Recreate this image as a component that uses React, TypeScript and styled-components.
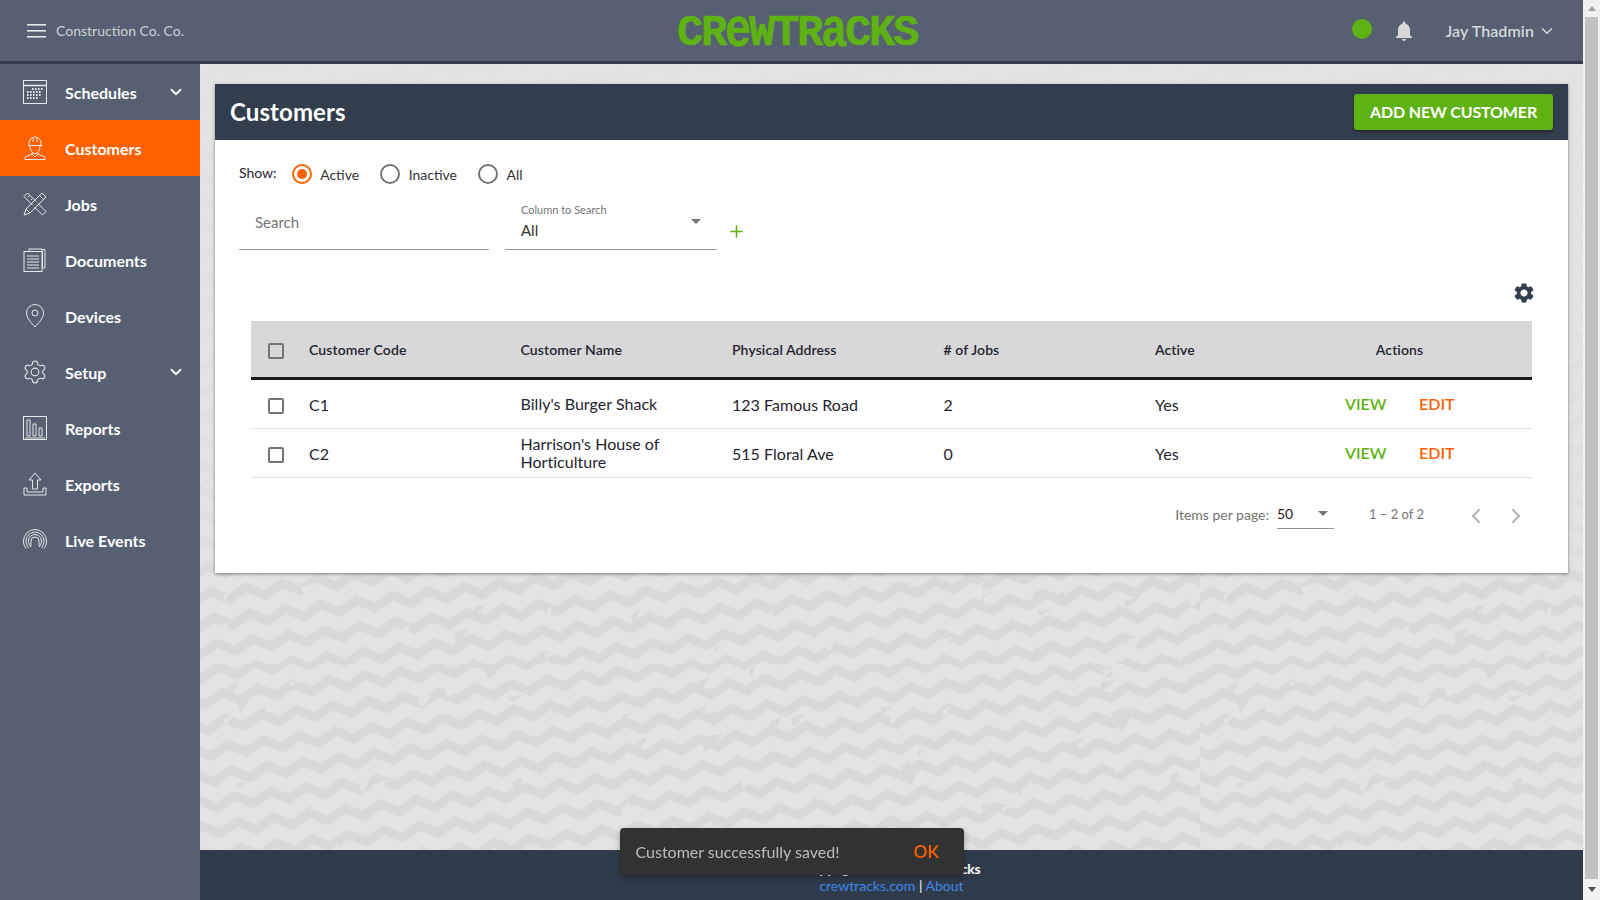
import React from 'react';
import styled, { createGlobalStyle } from 'styled-components';
import { ChevronDown, ChevronLeft, ChevronRight, Plus } from 'lucide-react';

const colors = {
  slate: '#566072',
  navy: '#323d4d',
  orange: '#ff6100',
  green: '#5fb213',
  icon: '#e6e8ea',
  text: '#1f2430',
  rule: '#e0e0e0',
};

// wallpaper: one big tile of tilted zigzags with some scuffs on it
function buildWallpaper() {
  let scuffs = '';
  let seed = 7;
  const next = (n: number) => {
    seed = (seed * 16807) % 2147483647;
    return seed % n;
  };
  for (let i = 0; i < 240; i++) {
    const x = next(1000);
    const y = next(600);
    const a = 5 + next(13);
    const b = 2 + next(5);
    const fill = i % 2 ? '#e3e3e3' : '#d9d9d9';
    scuffs += `<polygon points="${x},${y} ${x + a},${y - b} ${x + a / 2},${y + b} ${x + 2},${y + b + 3}" fill="${fill}"/>`;
  }
  const band = (y: number) =>
    `<path d="M-18 ${y} L0 ${y + 10} L18 ${y} L36 ${y + 10} L54 ${y}" fill="none" stroke="#d9d9d9" stroke-width="9"/>`;
  const svg = `<svg xmlns="http://www.w3.org/2000/svg" width="1000" height="600"><defs><pattern id="z" width="36" height="26" patternUnits="userSpaceOnUse" patternTransform="rotate(-7)">${band(-21)}${band(5)}${band(31)}</pattern></defs><rect width="1000" height="600" fill="#e3e3e3"/><rect width="1000" height="600" fill="url(#z)"/>${scuffs}</svg>`;
  return `data:image/svg+xml,${encodeURIComponent(svg)}`;
}

const wallpaper = buildWallpaper();

const GlobalStyle = createGlobalStyle`
  html, body {
    margin: 0;
    height: 100%;
    overflow: hidden;
  }
  body {
    font-family: Lato, "Liberation Sans", sans-serif;
    color: ${colors.text};
  }
  * {
    box-sizing: border-box;
  }
`;

const Shell = styled.div`
  display: flex;
  width: 1600px;
  height: 900px;
`;

const Main = styled.div`
  flex: 1;
  min-width: 0;
  display: flex;
  flex-direction: column;
`;

const ScrollTrack = styled.div`
  width: 17px;
  display: flex;
  flex-direction: column;
  align-items: center;
  background: #f1f1f1;
`;

const ScrollStep = styled.div<{ $down?: boolean }>`
  height: ${(p) => (p.$down ? '21px' : '17px')};
  flex: none;
  padding-top: ${(p) => (p.$down ? '8px' : '6px')};
  &::before {
    content: '';
    display: block;
    border: 4px solid transparent;
    border-top: ${(p) => (p.$down ? '5px solid #505050' : '0')};
    border-bottom: ${(p) => (p.$down ? '0' : '5px solid #a3a3a3')};
  }
`;

const ScrollThumb = styled.div`
  flex: 1;
  width: 13px;
  background: #c1c1c1;
`;

const TopBar = styled.header`
  height: 64px;
  flex: none;
  display: grid;
  grid-template-columns: 1fr auto 1fr;
  align-items: center;
  padding: 0 27px 0 27px;
  background: ${colors.slate};
  border-bottom: 3px solid ${colors.navy};
`;

const Company = styled.div`
  display: flex;
  align-items: center;
  gap: 10px;
  font-size: 14px;
  color: #cdd1d6;
`;

const Burger = styled.svg`
  width: 19px;
  height: 14px;
`;

const Logo = styled.div`
  margin: 4px 0 0 11px;
  width: 240px;
  font-family: 'Liberation Mono', monospace;
  font-weight: 700;
  font-size: 44px;
  line-height: 30px;
  letter-spacing: -2.4px;
  color: ${colors.green};
  -webkit-text-stroke: 0.5px ${colors.green};
  white-space: nowrap;
`;

const LogoSmall = styled.span`
  display: inline-block;
  transform: scaleY(1.25);
  transform-origin: 50% 78%;
`;

const TopRight = styled.div`
  display: flex;
  align-items: center;
  justify-content: flex-end;
`;

const StatusDot = styled.span`
  width: 20px;
  height: 20px;
  border-radius: 50%;
  background: ${colors.green};
  margin: -3px 20px 0 0;
`;

const Bell = styled.svg`
  width: 24px;
  height: 24px;
  margin-right: 29px;
  fill: #d8d8d8;
`;

const UserName = styled.div`
  display: flex;
  align-items: center;
  gap: 4px;
  font-size: 16px;
  font-weight: 600;
  letter-spacing: 0.1px;
  color: #d5d8dc;
`;

const Body = styled.div`
  flex: 1;
  min-height: 0;
  display: flex;
`;

const SideNav = styled.nav`
  width: 200px;
  flex: none;
  background: ${colors.slate};
`;

const NavRow = styled.div<{ $active?: boolean }>`
  height: 56px;
  display: flex;
  align-items: center;
  padding: 0 15px 0 23px;
  background: ${(p) => (p.$active ? colors.orange : 'transparent')};
  color: #fff;
  font-size: 16px;
  font-weight: 700;
`;

const NavIcon = styled.svg`
  width: 24px;
  height: 24px;
  margin-right: 18px;
  flex: none;
  fill: none;
  stroke: ${colors.icon};
  stroke-width: 1;
`;

const NavLabel = styled.span`
  flex: 1;
`;

const Content = styled.div`
  flex: 1;
  min-width: 0;
  display: flex;
  flex-direction: column;
  background-color: #e3e3e3;
  background-image: linear-gradient(
      rgba(227, 227, 227, 0.92),
      rgba(227, 227, 227, 0.6) 480px,
      rgba(227, 227, 227, 0) 515px
    ),
    url("${wallpaper}");
`;

const ScrollArea = styled.main`
  flex: 1;
  min-height: 0;
  padding: 20px 15px 0;
`;

const Card = styled.section`
  height: 489px;
  background: #fff;
  box-shadow: 0 1px 3px rgba(0, 0, 0, 0.45);
`;

const CardHead = styled.div`
  height: 56px;
  display: flex;
  align-items: center;
  justify-content: space-between;
  padding: 0 15px;
  background: ${colors.navy};
`;

const CardTitle = styled.h1`
  margin: -2px 0 0;
  font-size: 24px;
  font-weight: 700;
  letter-spacing: 0.1px;
  color: #fff;
`;

const PrimaryButton = styled.button`
  width: 199px;
  height: 36px;
  padding: 0 0 2px;
  border: 0;
  border-radius: 3px;
  background: ${colors.green};
  color: #fff;
  font-family: inherit;
  font-size: 16px;
  font-weight: 700;
  letter-spacing: -0.15px;
  box-shadow: 0 2px 3px rgba(0, 0, 0, 0.35);
`;

const ShowRow = styled.div`
  height: 40px;
  margin-top: 14px;
  padding: 0 24px;
  display: flex;
  align-items: center;
  font-size: 14px;
`;

const ShowLabel = styled.span`
  margin-right: 15px;
  margin-top: -3px;
`;

const RadioOption = styled.label`
  display: flex;
  align-items: center;
  gap: 8.5px;
  margin-right: 21px;
  color: #333;
`;

const RadioRing = styled.span<{ $on?: boolean }>`
  width: 20px;
  height: 20px;
  border-radius: 50%;
  border: 2px solid ${(p) => (p.$on ? colors.orange : '#757575')};
  display: flex;
  align-items: center;
  justify-content: center;
  &::after {
    content: '';
    width: 10px;
    height: 10px;
    border-radius: 50%;
    background: ${(p) => (p.$on ? colors.orange : 'transparent')};
  }
`;

const FilterRow = styled.div`
  display: flex;
  align-items: flex-end;
  gap: 16px;
  padding: 0 24px;
  margin-top: 1px;
`;

const SearchInput = styled.input`
  width: 250px;
  height: 55px;
  padding: 0 16px;
  border: 0;
  border-bottom: 1px solid #949494;
  outline: none;
  font-family: inherit;
  font-size: 15px;
  background: transparent;
  &::placeholder {
    color: #757575;
    opacity: 1;
  }
`;

const SelectBox = styled.div`
  position: relative;
  width: 212px;
  height: 55px;
  padding: 8px 16px 0;
  border-bottom: 1px solid #949494;
`;

const SelectCaption = styled.div`
  font-size: 11px;
  line-height: 14px;
  color: #757575;
`;

const SelectValue = styled.div`
  margin-top: 3px;
  font-size: 15px;
  line-height: 20px;
  color: #333;
`;

const Caret = styled.span`
  display: block;
  width: 0;
  height: 0;
  border-left: 5px solid transparent;
  border-right: 5px solid transparent;
  border-top: 5px solid #757575;
`;

const SelectCaret = styled(Caret)`
  position: absolute;
  right: 16px;
  top: 24px;
`;

const AddFilter = styled.span`
  display: flex;
  margin: 0 0 9px -6px;
  color: ${colors.green};
`;

const TableTools = styled.div`
  height: 71px;
  padding: 31px 32px 0 0;
  display: flex;
  justify-content: flex-end;
  align-items: flex-start;
`;

const Gear = styled.svg`
  width: 24px;
  height: 24px;
  fill: ${colors.navy};
`;

const TableWrap = styled.div`
  margin: 0 36px;
`;

const Row = styled.div<{ $head?: boolean }>`
  display: grid;
  grid-template-columns: 58px 211.5px 211.5px 211.5px 211.5px 112px 1fr;
  align-items: center;
  height: ${(p) => (p.$head ? '59px' : '49px')};
  background: ${(p) => (p.$head ? '#d8d8d8' : 'transparent')};
  border-bottom: ${(p) => (p.$head ? '3px solid #1b1b1b' : `1px solid ${colors.rule}`)};
  font-size: ${(p) => (p.$head ? '14px' : '16px')};
  font-weight: ${(p) => (p.$head ? 600 : 400)};
  letter-spacing: ${(p) => (p.$head ? '0.1px' : '0.03px')};
`;

const CheckCell = styled.div`
  padding: 3px 0 0 17px;
  display: flex;
`;

const CheckBox = styled.span`
  width: 16px;
  height: 16px;
  border: 2px solid #757575;
  border-radius: 2px;
`;

const NameCell = styled.div`
  line-height: 18.5px;
  padding-right: 20px;
`;

const ActionsHead = styled.div`
  text-align: center;
`;

const ActionLinks = styled.div`
  display: flex;
  padding-left: 78px;
  margin-top: -2px;
`;

const ActionLink = styled.a<{ $tone: string }>`
  width: 74px;
  font-weight: 600;
  letter-spacing: 0;
  color: ${(p) => p.$tone};
`;

const Pager = styled.div`
  height: 70px;
  margin: 0 36px;
  padding-top: 2px;
  display: flex;
  align-items: center;
  justify-content: flex-end;
  font-size: 14px;
  color: #757575;
`;

const PageSize = styled.div`
  width: 57px;
  height: 30px;
  margin: 0 35px 0 8px;
  display: flex;
  justify-content: space-between;
  align-items: center;
  padding-right: 6px;
  border-bottom: 1px solid #949494;
  color: #222;
  font-size: 14px;
`;

const PageCount = styled.span`
  margin-right: 24px;
  font-size: 13px;
`;

const PageArrow = styled.span`
  display: flex;
  margin-left: 16px;
  color: #b5b5b5;
`;

const PageArrows = styled.div`
  display: flex;
  margin: 3px 4px 0 0;
`;

const Foot = styled.footer`
  height: 50px;
  flex: none;
  padding-top: 10px;
  background: #2f3b4b;
  text-align: center;
  font-size: 14px;
  line-height: 17px;
  color: #fff;
`;

const FootLine = styled.div<{ $strong?: boolean }>`
  font-weight: ${(p) => (p.$strong ? 700 : 400)};
  letter-spacing: ${(p) => (p.$strong ? '-0.35px' : '0')};
`;

const FootLink = styled.a`
  color: #3f87e8;
`;

const Snack = styled.div`
  position: fixed;
  left: 620px;
  top: 828px;
  width: 344px;
  height: 47px;
  display: flex;
  align-items: center;
  justify-content: space-between;
  padding: 0 25px 0 15.5px;
  border-radius: 4px;
  background: #323232;
  color: #bdbdbd;
  font-size: 16px;
  box-shadow: 0 3px 6px rgba(0, 0, 0, 0.3);
`;

const SnackAction = styled.span`
  color: ${colors.orange};
  font-size: 17px;
  font-weight: 600;
`;

const navItems = [
  { label: 'Schedules', icon: 'calendar', more: true },
  { label: 'Customers', icon: 'worker', active: true },
  { label: 'Jobs', icon: 'tools' },
  { label: 'Documents', icon: 'docs' },
  { label: 'Devices', icon: 'pin' },
  { label: 'Setup', icon: 'gear', more: true },
  { label: 'Reports', icon: 'bars' },
  { label: 'Exports', icon: 'export' },
  { label: 'Live Events', icon: 'live' },
];

const customers = [
  { code: 'C1', name: "Billy's Burger Shack", address: '123 Famous Road', jobs: 2 },
  { code: 'C2', name: "Harrison's House of Horticulture", address: '515 Floral Ave', jobs: 0 },
];

function IconShape({ name }: { name: string }) {
  switch (name) {
    case 'calendar':
      return (
        <>
          <rect x="0.5" y="0.5" width="23" height="23" />
          <path d="M0.5 5.5h23" strokeWidth="1.5" />
          <path
            d="M9 9h1.6M12 9h1.6M15 9h1.6M18 9h1.6M4 12h1.6M7 12h1.6M10 12h1.6M13 12h1.6M16 12h1.6M4 15h1.6M7 15h1.6M10 15h1.6M13 15h1.6M16 15h1.6M4 18h1.6M7 18h1.6M10 18h1.6M13 18h1.6"
            strokeWidth="2"
          />
        </>
      );
    case 'worker':
      return (
        <>
          <path d="M6 9.500V7a6 6 0 0 1 12 0v2.500M4.800 9.500h14.400M10 1.500V6M14 1.500V6" />
          <path d="M7 10c0 4 2 7.500 5 7.500s5-3.500 5-7.500" />
          <path d="M9 16.500v1.500l-7 3v2.500h20V21l-7-3v-1.500M9 18l3 3 3-3" />
        </>
      );
    case 'tools':
      return (
        <>
          <path d="M9.500 13 1 4.500 4.500 1 13 9.500" />
          <path d="M15 11.500 23 19.500 19.500 23 11.500 15" />
          <path d="M6.500 3.500 5 5M9.500 6.500 8 8" />
          <path d="M19 1l4 4L7 21l-6 2 2-6Z" />
          <path d="M16.500 3.500l4 4M3 17l4 4" />
        </>
      );
    case 'docs':
      return (
        <>
          <path d="M6 3V1h13v2M19 1.500h3V20h-2" />
          <rect x="1" y="3.500" width="18" height="20" />
          <path d="M19.500 3v17" />
          <path d="M4 8h12M4 11h12M4 14h12M4 17h12M4 20h12" strokeWidth="1.200" />
        </>
      );
    case 'pin':
      return (
        <>
          <path d="M12 23C9 19.500 3.500 14.500 3.500 9a8.500 8.500 0 0 1 17 0c0 5.500-5.500 10.500-8.500 14Z" />
          <circle cx="12" cy="9" r="3" />
        </>
      );
    case 'gear':
      return (
        <g transform="translate(-1.200 -1.200) scale(1.100)">
          <path d="M9.671 4.136a2.34 2.34 0 0 1 4.659 0 2.34 2.34 0 0 0 3.319 1.915 2.34 2.34 0 0 1 2.33 4.033 2.34 2.34 0 0 0 0 3.831 2.34 2.34 0 0 1-2.33 4.033 2.34 2.34 0 0 0-3.319 1.915 2.34 2.34 0 0 1-4.659 0 2.34 2.34 0 0 0-3.32-1.915 2.34 2.34 0 0 1-2.33-4.033 2.34 2.34 0 0 0 0-3.831A2.34 2.34 0 0 1 6.35 6.051a2.34 2.34 0 0 0 3.319-1.915" />
          <circle cx="12" cy="12" r="3.500" />
        </g>
      );
    case 'bars':
      return (
        <>
          <rect x="0.500" y="0.500" width="23" height="23" />
          <path d="M4 4h3v16H4ZM10 8h3v12h-3ZM16 12h3v8h-3ZM2 22h20" />
        </>
      );
    case 'export':
      return (
        <>
          <path d="M12 1l6 7h-3.500v9h-5V8H6Z" />
          <path d="M1 16v7h22v-7h-3v4H4v-4Z" />
        </>
      );
    default:
      return (
        <>
          <path d="M3 20.500C1 18 .5 15.500.5 13a11.500 11.500 0 0 1 23 0c0 2.500-.5 5-2.500 7.500" />
          <path d="M5.500 20C4 18 3 15.500 3 13a9 9 0 0 1 18 0c0 2.500-1 5-2.500 7" />
          <path d="M8 19C6.500 17.500 5.500 15.500 5.500 13a6.500 6.500 0 0 1 13 0c0 2.500-1 4.500-2.500 6" />
          <path d="M8 18v-5a4 4 0 0 1 8 0v5" />
        </>
      );
  }
}

export default function App() {
  return (
    <Shell>
      <GlobalStyle />
      <Main>
        <TopBar>
          <Company>
            <Burger viewBox="0 0 19 14" fill="#e6e8ea">
              <rect y="0" width="19" height="1.600" />
              <rect y="6" width="19" height="1.600" />
              <rect y="12" width="19" height="1.600" />
            </Burger>
            Construction Co. Co.
          </Company>
          <Logo>
            CR<LogoSmall>e</LogoSmall>WTR<LogoSmall>a</LogoSmall>CKS
          </Logo>
          <TopRight>
            <StatusDot />
            <Bell viewBox="0 0 24 24">
              <path d="M12 22c1.100 0 2-.900 2-2h-4c0 1.100.900 2 2 2zm6-6v-5c0-3.070-1.630-5.640-4.500-6.320V4c0-.830-.670-1.500-1.500-1.500s-1.500.670-1.500 1.500v.680C7.640 5.360 6 7.920 6 11v5l-2 2v1h16v-1l-2-2z" />
            </Bell>
            <UserName>
              Jay Thadmin
              <ChevronDown size={18} />
            </UserName>
          </TopRight>
        </TopBar>
        <Body>
          <SideNav>
            {navItems.map((item) => (
              <NavRow key={item.label} $active={item.active}>
                <NavIcon viewBox="0 0 24 24">
                  <IconShape name={item.icon} />
                </NavIcon>
                <NavLabel>{item.label}</NavLabel>
                {item.more && <ChevronDown size={18} strokeWidth={2.500} />}
              </NavRow>
            ))}
          </SideNav>
          <Content>
            <ScrollArea>
              <Card>
                <CardHead>
                  <CardTitle>Customers</CardTitle>
                  <PrimaryButton>ADD NEW CUSTOMER</PrimaryButton>
                </CardHead>
                <ShowRow>
                  <ShowLabel>Show:</ShowLabel>
                  <RadioOption>
                    <RadioRing $on />
                    Active
                  </RadioOption>
                  <RadioOption>
                    <RadioRing />
                    Inactive
                  </RadioOption>
                  <RadioOption>
                    <RadioRing />
                    All
                  </RadioOption>
                </ShowRow>
                <FilterRow>
                  <SearchInput placeholder="Search" />
                  <SelectBox>
                    <SelectCaption>Column to Search</SelectCaption>
                    <SelectValue>All</SelectValue>
                    <SelectCaret />
                  </SelectBox>
                  <AddFilter>
                    <Plus size={19} />
                  </AddFilter>
                </FilterRow>
                <TableTools>
                  <Gear viewBox="0 0 24 24">
                    <path d="M19.140 12.940c.040-.300.060-.610.060-.940 0-.320-.020-.640-.070-.940l2.030-1.580c.180-.140.230-.410.120-.610l-1.920-3.320c-.120-.220-.370-.290-.590-.220l-2.390.960c-.500-.380-1.030-.700-1.620-.940l-.360-2.540c-.040-.240-.240-.410-.480-.410h-3.840c-.240 0-.430.170-.470.410l-.360 2.540c-.590.240-1.130.570-1.620.940l-2.390-.960c-.220-.080-.470 0-.590.220L2.740 8.870c-.120.210-.080.470.120.610l2.030 1.580c-.050.300-.090.630-.090.940s.020.640.070.940l-2.030 1.580c-.180.140-.230.410-.120.610l1.920 3.320c.120.220.370.290.590.220l2.390-.960c.500.380 1.030.700 1.620.940l.360 2.540c.050.240.240.410.480.410h3.840c.240 0 .440-.170.470-.410l.360-2.540c.590-.240 1.130-.560 1.620-.940l2.390.960c.220.080.470 0 .590-.220l1.920-3.320c.120-.220.070-.470-.120-.610l-2.010-1.580zM12 15.600c-1.980 0-3.600-1.620-3.600-3.600s1.620-3.600 3.600-3.600 3.600 1.620 3.600 3.600-1.620 3.600-3.600 3.600z" />
                  </Gear>
                </TableTools>
                <TableWrap>
                  <Row $head>
                    <CheckCell>
                      <CheckBox />
                    </CheckCell>
                    <div>Customer Code</div>
                    <div>Customer Name</div>
                    <div>Physical Address</div>
                    <div># of Jobs</div>
                    <div>Active</div>
                    <ActionsHead>Actions</ActionsHead>
                  </Row>
                  {customers.map((c) => (
                    <Row key={c.code}>
                      <CheckCell>
                        <CheckBox />
                      </CheckCell>
                      <div>{c.code}</div>
                      <NameCell>{c.name}</NameCell>
                      <div>{c.address}</div>
                      <div>{c.jobs}</div>
                      <div>Yes</div>
                      <ActionLinks>
                        <ActionLink $tone={colors.green}>VIEW</ActionLink>
                        <ActionLink $tone={colors.orange}>EDIT</ActionLink>
                      </ActionLinks>
                    </Row>
                  ))}
                </TableWrap>
                <Pager>
                  Items per page:
                  <PageSize>
                    50
                    <Caret />
                  </PageSize>
                  <PageCount>1 – 2 of 2</PageCount>
                  <PageArrows>
                    <PageArrow>
                      <ChevronLeft size={24} strokeWidth={2.2} />
                    </PageArrow>
                    <PageArrow>
                      <ChevronRight size={24} strokeWidth={2.2} />
                    </PageArrow>
                  </PageArrows>
                </Pager>
              </Card>
            </ScrollArea>
            <Foot>
              <FootLine $strong>Copyright © 2021 CrewTracks</FootLine>
              <FootLine>
                <FootLink>crewtracks.com</FootLink> | <FootLink>About</FootLink>
              </FootLine>
            </Foot>
          </Content>
        </Body>
      </Main>
      <ScrollTrack>
        <ScrollStep />
        <ScrollThumb />
        <ScrollStep $down />
      </ScrollTrack>
      <Snack>
        Customer successfully saved!
        <SnackAction>OK</SnackAction>
      </Snack>
    </Shell>
  );
}
